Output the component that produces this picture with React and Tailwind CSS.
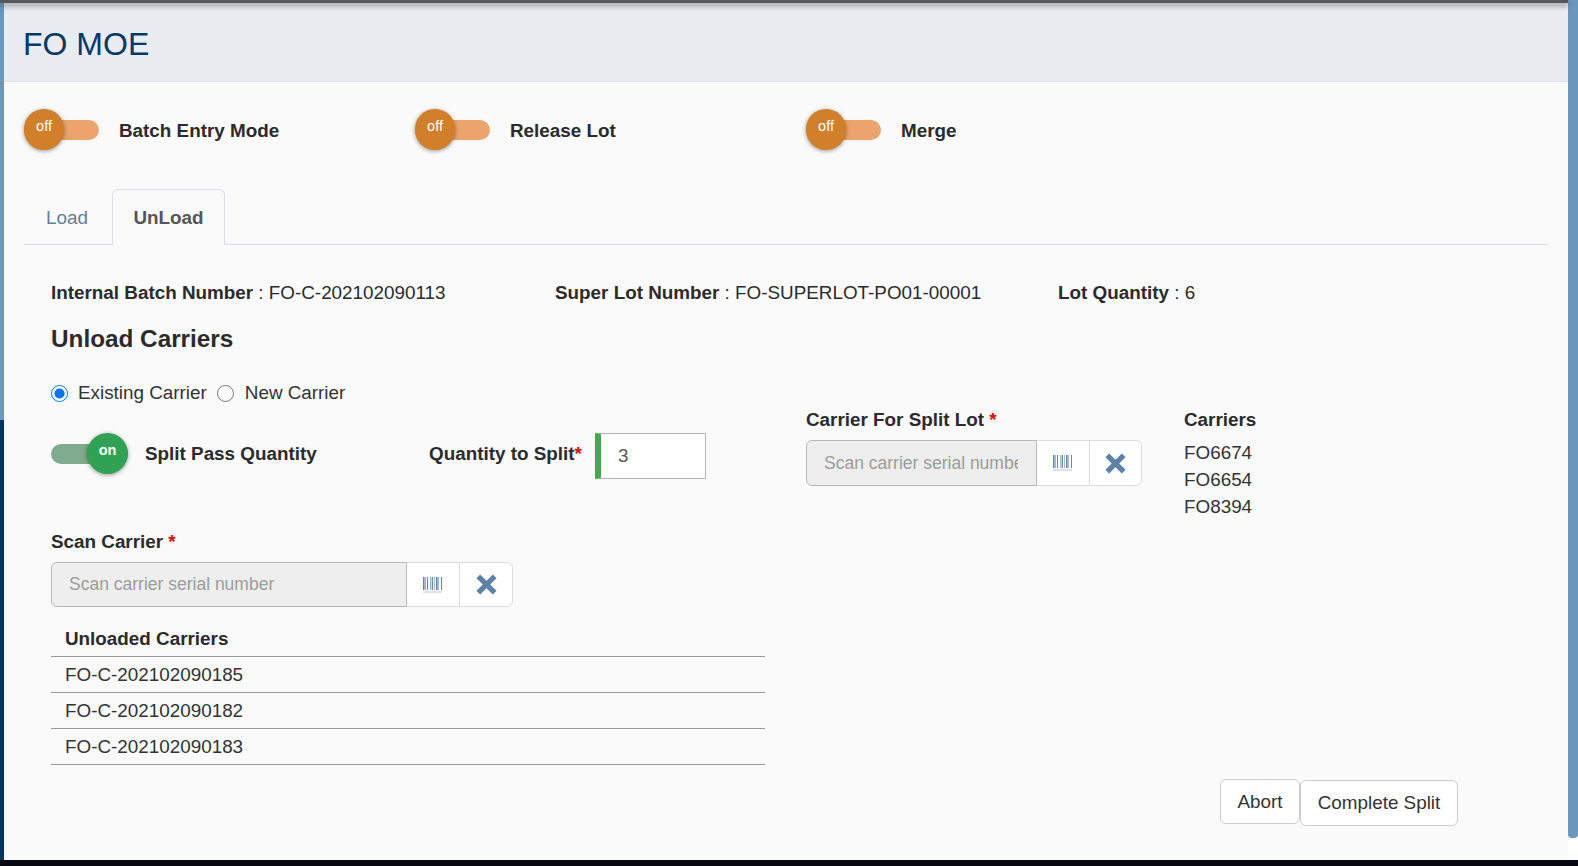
import React from 'react';

const BarcodeIcon = () => (
  <svg width="20" height="16" viewBox="0 0 20 16" className="text-[#5b82a8]">
    {[0, 2, 4, 7, 9, 11, 13, 15, 18].map((x, i) => (
      <rect key={x} x={x} y="0" width={i % 3 === 0 ? 1.6 : 1} height="13" fill="currentColor" opacity={i % 2 ? 0.55 : 0.95} />
    ))}
    <rect x="0" y="14.5" width="19" height="1" fill="currentColor" opacity="0.45" />
  </svg>
);

const CloseIcon = () => (
  <svg width="21" height="21" viewBox="0 0 20 20" className="text-[#5c82a8]">
    <path d="M2.2 2.2 L17.8 17.8 M17.8 2.2 L2.2 17.8" stroke="currentColor" strokeWidth="5" />
  </svg>
);

const OffToggle = ({ label }) => (
  <div className="flex items-center w-[391px]">
    <div className="relative w-[75px] h-[41px] flex items-center">
      <div className="w-full h-[20px] rounded-full bg-[#eba56a]" />
      <div className="absolute left-0 top-0 w-[40px] h-[41px] rounded-full bg-[#d17f29] shadow-[0_1px_4px_rgba(0,0,0,0.4)] text-white text-center text-[14.5px] leading-[34px]">
        off
      </div>
    </div>
    <span className="ml-[20px] mt-[4px] text-[18.85px] font-bold text-[#2b2b2b]">{label}</span>
  </div>
);

const ScanInput = ({ inputWidth, height, closeWidth }) => (
  <div className={`flex ${height}`}>
    <input
      readOnly
      placeholder="Scan carrier serial number"
      className={`${inputWidth} h-full pl-[17px] pr-[18px] bg-[#eeeeee] border border-[#b8b8b8] rounded-l-[6px] text-[17.5px] placeholder:text-[#9c9c9c] outline-none`}
    />
    <div className="w-[52px] flex items-center justify-center bg-white border-y border-[#dddddd]">
      <BarcodeIcon />
    </div>
    <div className={`${closeWidth} flex items-center justify-center bg-white border border-[#dddddd] rounded-r-[6px]`}>
      <CloseIcon />
    </div>
  </div>
);

const carriers = ['FO-C-202102090185', 'FO-C-202102090182', 'FO-C-202102090183'];

export default function App() {
  return (
    <div className="relative w-[1578px] h-[866px] bg-[#05090f] overflow-hidden font-['Liberation_Sans',Arial,sans-serif] text-[#2b2b2b]">
      <div className="flex h-[860px]">
        {/* window edge on the left */}
        <div className="w-[4px] flex flex-col bg-[#003560]">
          <div className="h-[420px] bg-[#6b97bd]" />
        </div>

        <div className="w-[1564px] bg-[#fafafa]">
          {/* Header */}
          <div className="h-[82px] bg-[#e9ecf1] border-b border-[#dfe3e8] pl-[19px] pt-[24px]">
            <h1 className="text-[32px] leading-[40px] text-[#003a6b]">FO MOE</h1>
          </div>

          {/* Toggles */}
          <div className="flex pl-[20px] pt-[27px]">
            <OffToggle label="Batch Entry Mode" />
            <OffToggle label="Release Lot" />
            <OffToggle label="Merge" />
          </div>

          {/* Tabs */}
          <div className="ml-[20px] mr-[20px] mt-[39px] h-[56px] flex border-b border-[#dcdfe3]">
            <div className="w-[88px] pl-[22px] pt-[18px] text-[18.85px] leading-[22px] text-[#5d8199]">Load</div>
            <div className="w-[113px] h-[56px] pt-[17px] text-center text-[18.85px] leading-[22px] font-bold text-[#555555] bg-[#fafafa] border border-b-0 border-[#dcdfe3] rounded-t-[6px]">
              UnLoad
            </div>
          </div>

          <div className="pl-[47px]">
            {/* Batch info */}
            <div className="flex pt-[37px] text-[18.85px] leading-[22px]">
              <div className="w-[504px]"><b>Internal Batch Number</b> : FO-C-202102090113</div>
              <div className="w-[503px]"><b>Super Lot Number</b> : FO-SUPERLOT-PO01-00001</div>
              <div><b>Lot Quantity</b> : 6</div>
            </div>

            <h2 className="mt-[20px] text-[24.3px] leading-[30px] font-bold">Unload Carriers</h2>

            <div className="flex mt-[27px]">
              {/* Left column */}
              <div className="w-[755px]">
                <div className="flex items-center h-[24px] text-[18.85px] text-[#333333]">
                  <input type="radio" name="carrier" defaultChecked className="w-[17px] h-[17px] m-0 accent-[#0075ff]" />
                  <span className="ml-[10px]">Existing Carrier</span>
                  <input type="radio" name="carrier" className="w-[17px] h-[17px] m-0 ml-[10px]" />
                  <span className="ml-[11px]">New Carrier</span>
                </div>

                <div className="flex items-start mt-[28px]">
                  <div className="relative w-[77px] h-[41px] flex items-center">
                    <div className="w-full h-[20px] rounded-full bg-[#7fab8e]" />
                    <div className="absolute right-0 top-0 w-[41px] h-[41px] rounded-full bg-[#2fa254] shadow-[0_1px_4px_rgba(0,0,0,0.4)] text-white text-center text-[14.5px] font-bold leading-[34px]">
                      on
                    </div>
                  </div>
                  <span className="ml-[17px] w-[284px] h-[41px] pt-[2px] flex items-center text-[18.85px] font-bold">Split Pass Quantity</span>
                  <span className="w-[166px] h-[41px] pt-[2px] flex items-center text-[18.85px] font-bold">
                    <span>Quantity to Split<span className="text-[#ff0000]">*</span></span>
                  </span>
                  <input
                    readOnly
                    value="3"
                    className="w-[111px] h-[46px] pl-[17px] bg-white border border-[#b5b5b5] border-l-[6px] border-l-[#43ab4c] text-[18.85px] text-[#555555] outline-none"
                  />
                </div>

                <div className="mt-[51px] text-[18.85px] leading-[24px] font-bold">
                  Scan Carrier <span className="text-[#ff0000]">*</span>
                </div>
                <div className="mt-[8px]">
                  <ScanInput inputWidth="w-[356px]" height="h-[45px]" closeWidth="w-[54px]" />
                </div>

                <div className="mt-[14px] w-[714px] text-[18.85px]">
                  <div className="h-[36px] pl-[14px] pt-[2px] flex items-center font-bold border-b border-[#9a9a9a]">Unloaded Carriers</div>
                  {carriers.map((carrier) => (
                    <div key={carrier} className="h-[36px] pl-[14px] pt-[2px] flex items-center border-b border-[#9a9a9a] text-[#333333]">
                      {carrier}
                    </div>
                  ))}
                </div>
              </div>

              {/* Right column */}
              <div className="flex pt-[27px]">
                <div className="w-[378px]">
                  <div className="text-[18.85px] leading-[24px] font-bold">
                    Carrier For Split Lot <span className="text-[#ff0000]">*</span>
                  </div>
                  <div className="mt-[8px]">
                    <ScanInput inputWidth="w-[231px]" height="h-[46px]" closeWidth="w-[53px]" />
                  </div>
                </div>
                <div>
                  <div className="text-[18.85px] leading-[24px] font-bold">Carriers</div>
                  <div className="mt-[7px] text-[18.85px] leading-[27px] text-[#333333]">
                    <div>FO6674</div>
                    <div>FO6654</div>
                    <div>FO8394</div>
                  </div>
                </div>
              </div>
            </div>

            {/* Actions */}
            <div className="flex justify-end items-start mt-[14px] pr-[110px] text-[18.85px] text-[#333333]">
              <button className="w-[80px] h-[45px] pt-[2px] bg-white border border-[#cccccc] rounded-[6px]">Abort</button>
              <button className="w-[158px] h-[46px] mt-[1px] bg-white border border-[#cccccc] rounded-[6px]">Complete Split</button>
            </div>
          </div>
        </div>

        {/* Window scrollbar on the right */}
        <div className="w-[10px] bg-white flex flex-col">
          <div className="h-[838px] bg-[#6b97bd] rounded-b-[4px]" />
        </div>
      </div>
      <div className="absolute top-0 left-0 w-[1568px] h-[3px] bg-[#55575b] shadow-[0_3px_5px_rgba(60,60,70,0.6)]" />
    </div>
  );
}
